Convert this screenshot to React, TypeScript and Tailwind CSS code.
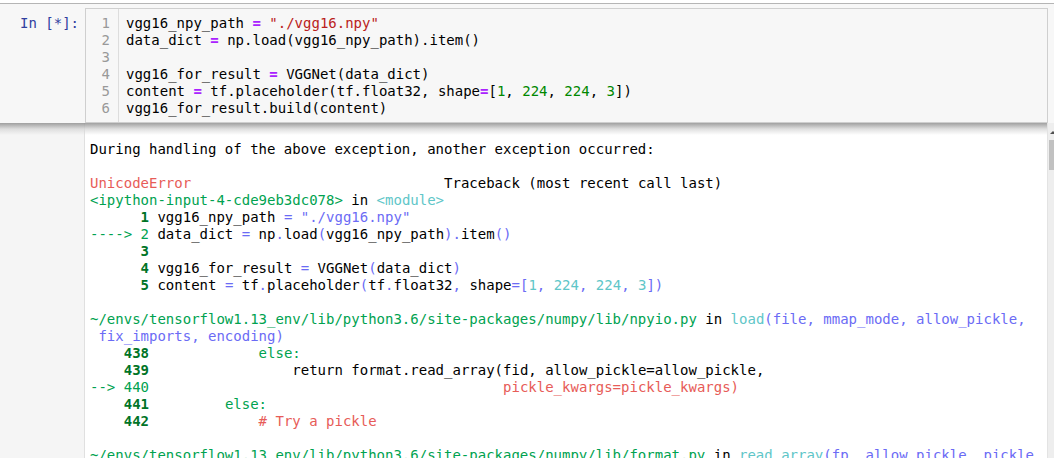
import React from 'react'

type Seg = [string, string?]

const K = 'text-[#000000]'
const RED = 'text-[#e75c58]'
const GRN = 'text-[#00a250]'
const BGRN = 'text-[#007427] font-bold'
const CYN = 'text-[#60c6c8]'
const BLU = 'text-[#6b6bf5]'

const codeLines: Seg[][] = [
  [['vgg16_npy_path '], ['=', 'text-[#aa22ff] font-bold'], [' '], ['"./vgg16.npy"', 'text-[#ba2121]']],
  [['data_dict '], ['=', 'text-[#aa22ff] font-bold'], [' np.load(vgg16_npy_path).item()']],
  [[' ']],
  [['vgg16_for_result '], ['=', 'text-[#aa22ff] font-bold'], [' VGGNet(data_dict)']],
  [['content '], ['=', 'text-[#aa22ff] font-bold'], [' tf.placeholder(tf.float32, shape'], ['=', 'text-[#aa22ff] font-bold'], ['['], ['1', 'text-[#008800]'], [', '], ['224', 'text-[#008800]'], [', '], ['224', 'text-[#008800]'], [', '], ['3', 'text-[#008800]'], ['])']],
  [['vgg16_for_result.build(content)']],
]

const outLines: Seg[][] = [
  [['During handling of the above exception, another exception occurred:']],
  [[' ']],
  [['UnicodeError', RED], ['                              Traceback (most recent call last)']],
  [['<ipython-input-4-cde9eb3dc078>', GRN], [' in '], ['<module>', CYN]],
  [['      '], ['1', BGRN], [' vgg16_npy_path '], ['= "./vgg16.npy"', BLU]],
  [['----> 2', GRN], [' data_dict '], ['=', BLU], [' np'], ['.', BLU], ['load'], ['(', BLU], ['vgg16_npy_path'], [').', BLU], ['item'], ['()', BLU]],
  [['      '], ['3', BGRN]],
  [['      '], ['4', BGRN], [' vgg16_for_result '], ['=', BLU], [' VGGNet'], ['(', BLU], ['data_dict'], [')', BLU]],
  [['      '], ['5', BGRN], [' content '], ['=', BLU], [' tf'], ['.', BLU], ['placeholder'], ['(', BLU], ['tf'], ['.', BLU], ['float32'], [',', BLU], [' shape'], ['=[', BLU], ['1', CYN], [', ', BLU], ['224', CYN], [', ', BLU], ['224', CYN], [', ', BLU], ['3', CYN], ['])', BLU]],
  [[' ']],
  [['~/envs/tensorflow1.13_env/lib/python3.6/site-packages/numpy/lib/npyio.py', GRN], [' in '], ['load', CYN], ['(file, mmap_mode, allow_pickle,', BLU]],
  [[' fix_imports, encoding)', BLU]],
  [['    '], ['438', BGRN], ['             '], ['else:', GRN]],
  [['    '], ['439', BGRN], ['                 return format.read_array(fid, allow_pickle=allow_pickle,']],
  [['--> 440', GRN], ['                                          '], ['pickle_kwargs=pickle_kwargs)', RED]],
  [['    '], ['441', BGRN], ['         '], ['else:', GRN]],
  [['    '], ['442', BGRN], ['             '], ['# Try a pickle', RED]],
  [[' ']],
  [['~/envs/tensorflow1.13_env/lib/python3.6/site-packages/numpy/lib/format.py', GRN], [' in '], ['read_array', CYN], ['(fp, allow_pickle, pickle_', BLU]],
]

function Line({ segs }: { segs: Seg[] }) {
  return (
    <div className="h-[17px] whitespace-pre">
      {segs.map(([t, c], i) => (
        <span key={i} className={c ?? K}>
          {t}
        </span>
      ))}
    </div>
  )
}

export default function App() {
  return (
    <div
      className="w-[1054px] h-[458px] overflow-hidden bg-[#f7f7f7] text-[14px] leading-[17px]"
      style={{ fontFamily: '"DejaVu Sans Mono", monospace' }}
    >
      <div className="h-[3px] bg-white" />
      <div className="h-px bg-[#b5b5b5]" />
      <div className="flex pt-[4px]">
        <div className="w-[85px] shrink-0 pt-[7px] pr-[6px] text-right text-[#303f9f]">In [*]:</div>
        <div className="flex w-[963px] h-[115px] border border-[#cfcfcf] bg-[#f7f7f7]">
          <div className="w-[33px] shrink-0 border-r border-[#dddddd] pt-[6px] pr-[8px] text-right text-[#999999]">
            {codeLines.map((_, i) => (
              <div key={i} className="h-[17px]">
                {i + 1}
              </div>
            ))}
          </div>
          <div className="pt-[6px] pl-[7px]">
            {codeLines.map((l, i) => (
              <Line key={i} segs={l} />
            ))}
          </div>
        </div>
      </div>
      <div className="relative flex h-[400px] bg-[#f5f5f5]">
        <div className="absolute inset-x-0 top-0 h-[12px] bg-gradient-to-b from-[#8a8a8a] via-[#d8d8d8] to-transparent opacity-80 pointer-events-none" />
        <div className="w-[85px] shrink-0 border-r border-[#e0e0e0]" />
        <div className="flex-1 overflow-hidden bg-white pl-[5px] pt-[18px]">
          {outLines.map((l, i) => (
            <Line key={i} segs={l} />
          ))}
        </div>
        <div className="relative w-[7px] shrink-0 bg-[#eeeeee] border-l border-[#e3e3e3]">
          <div className="absolute left-[1px] top-[17px] w-[6px] h-[30px] bg-[#c1c1c1]" />
          <div className="absolute left-[2px] top-[8px] w-0 h-0 border-x-[3px] border-x-transparent border-b-[3px] border-b-[#505050]" />
        </div>
      </div>
    </div>
  )
}
